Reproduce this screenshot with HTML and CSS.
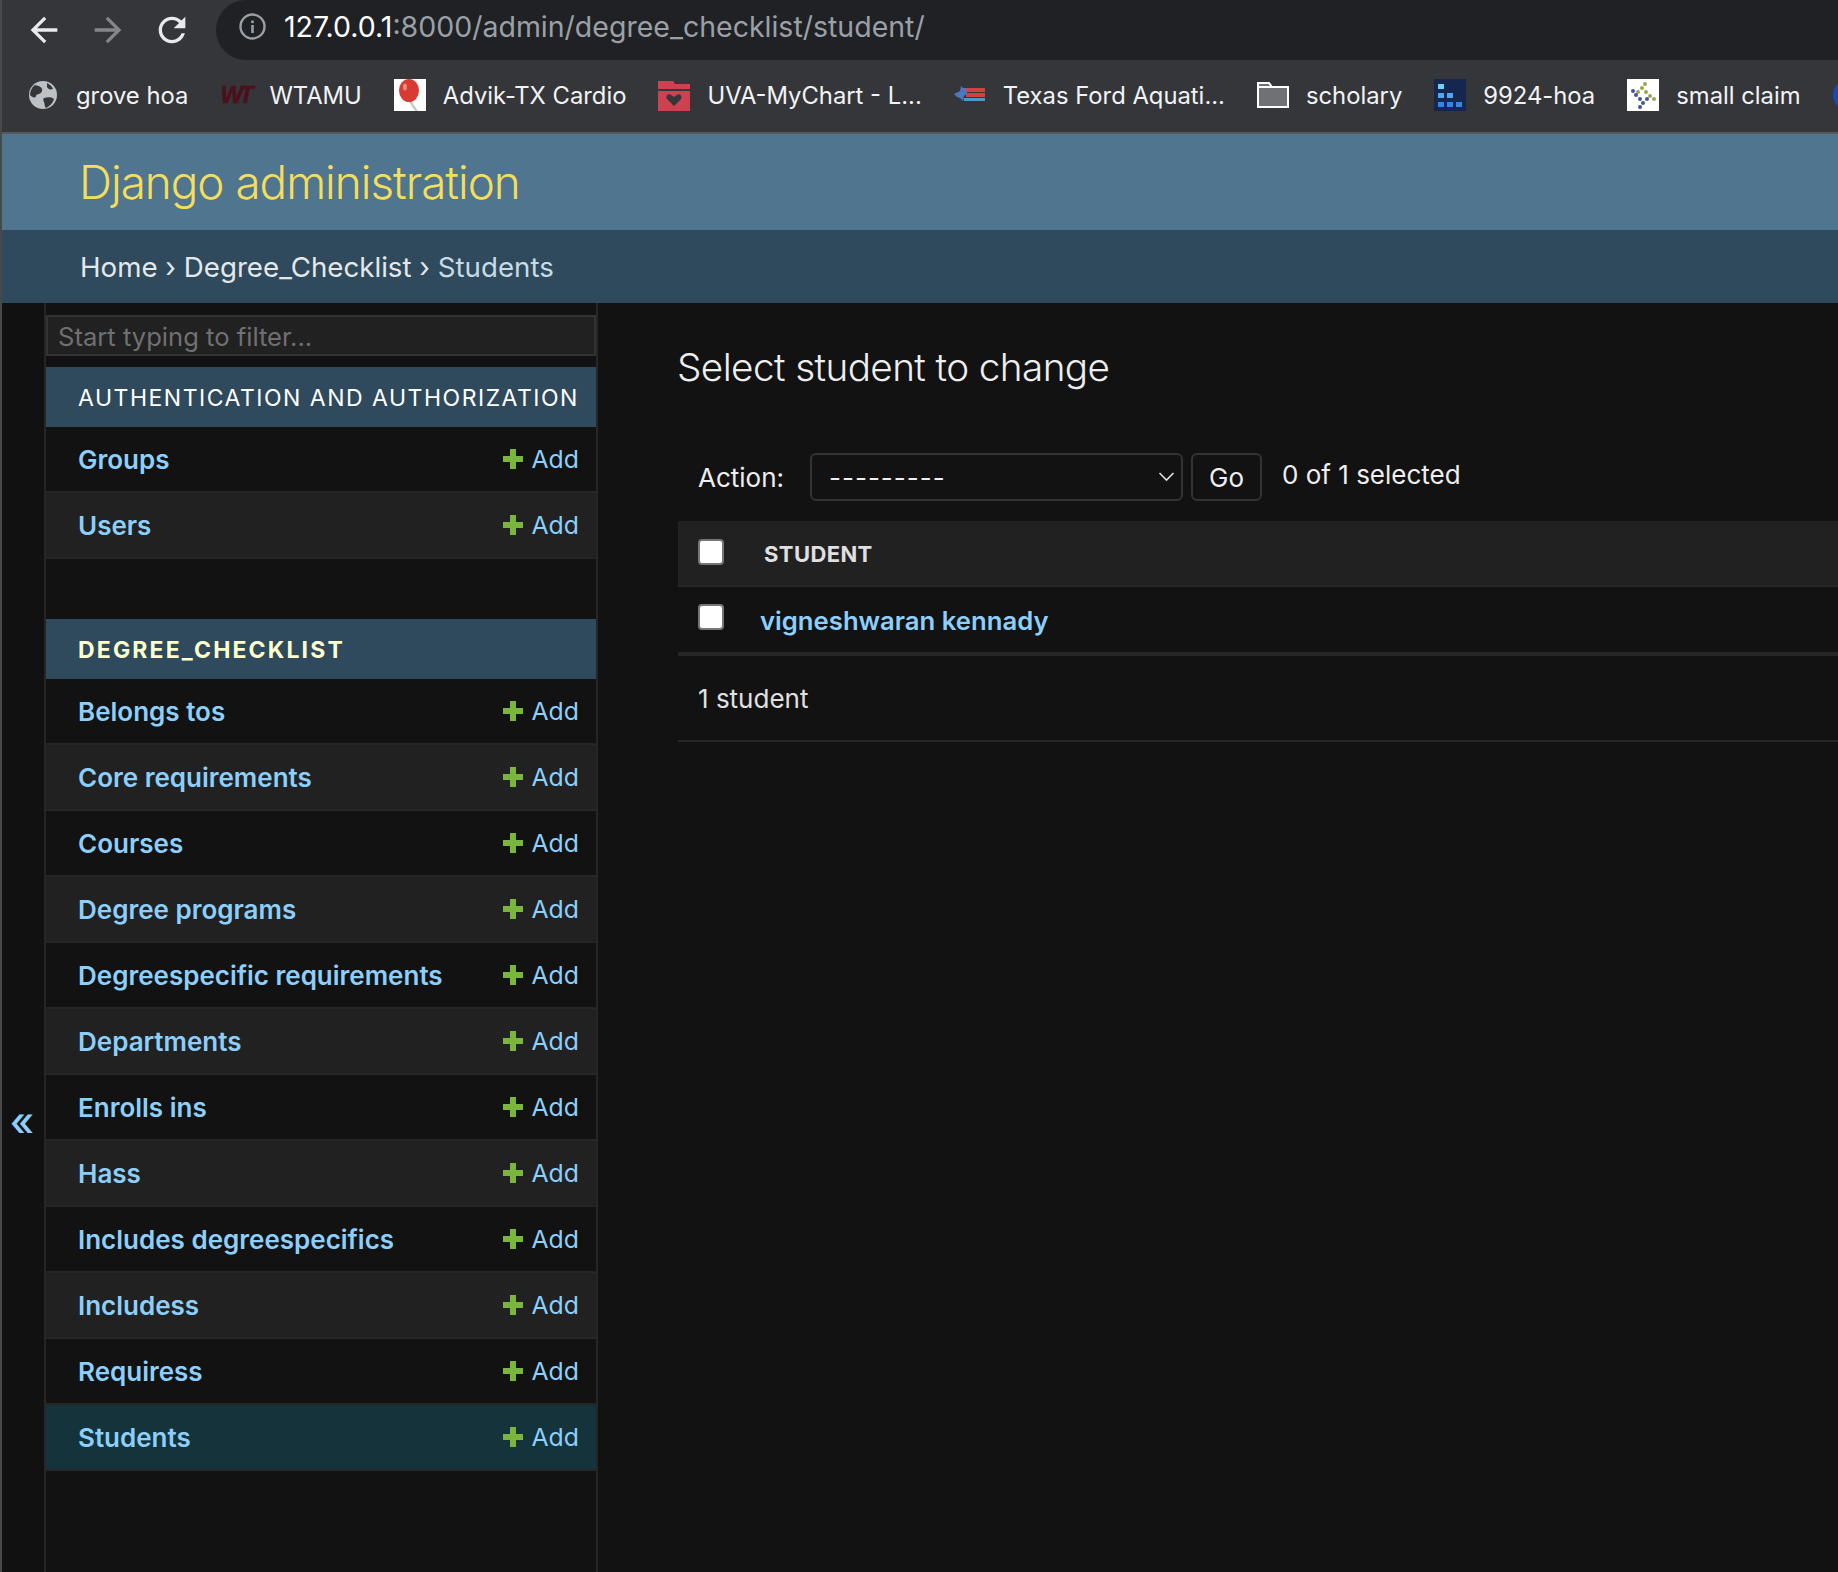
FILE: index.html
```html
<!DOCTYPE html>
<html lang="en">
<head>
  <meta charset="UTF-8">
  <title>Select student to change | Django site admin</title>
  <link rel="stylesheet" href="styles.css">
</head>
<body>

  <!-- Browser chrome -->
  <div class="toolbar">
    <svg class="nav-icon" viewBox="0 0 24 24"><path d="M20 11H7.83l5.59-5.59L12 4l-8 8 8 8 1.41-1.41L7.83 13H20v-2z"/></svg>
    <svg class="nav-icon off" viewBox="0 0 24 24"><path d="M4 11h12.17l-5.59-5.59L12 4l8 8-8 8-1.41-1.41L16.17 13H4v-2z"/></svg>
    <svg class="nav-icon" viewBox="0 0 24 24"><path d="M17.65 6.35C16.2 4.9 14.21 4 12 4c-4.42 0-7.99 3.58-7.99 8s3.57 8 7.99 8c3.73 0 6.84-2.55 7.73-6h-2.08c-.82 2.33-3.04 4-5.65 4-3.31 0-6-2.69-6-6s2.69-6 6-6c1.66 0 3.14.69 4.22 1.78L13 11h7V4l-2.35 2.35z"/></svg>
    <div class="address">
      <svg class="info-icon" viewBox="0 0 27 27">
        <circle cx="13.5" cy="13.5" r="12" fill="none" stroke="#9aa0a6" stroke-width="2.4"/>
        <rect x="12.2" y="12" width="2.6" height="8" fill="#9aa0a6"/>
        <rect x="12.2" y="7.5" width="2.6" height="2.6" fill="#9aa0a6"/>
      </svg>
      <span class="url">127.0.0.1<span class="url-rest">:8000/admin/degree_checklist/student/</span></span>
    </div>
  </div>

  <div class="bookmarks">
    <a class="bookmark">
      <svg class="fav" viewBox="-2 -2 32 32">
        <circle cx="14" cy="14" r="14" fill="#bdc1c6"/>
        <path d="M6 4c4 1 8 2 7 6s-5 2-6 5-4 1-6-1C1 10 3 6 6 4zM15 17c4-1 8-1 10 1-1 4-4 7-8 9-2-2-1-4-2-6s-1-3 0-4zM18 2c2 1 5 3 6 6-3 1-5 0-6-2z" fill="#35363a"/>
      </svg>
      grove hoa
    </a>
    <a class="bookmark"><span class="fav fav-wt">WT</span>WTAMU</a>
    <a class="bookmark">
      <svg class="fav" viewBox="0 0 32 32">
        <rect width="32" height="32" fill="#fff"/>
        <ellipse cx="15" cy="11.5" rx="10" ry="11.5" fill="#d93a32"/>
        <ellipse cx="11" cy="8" rx="2" ry="3.5" fill="#ee8a80"/>
        <path d="M15 23l6 9h3l-6-9z" fill="#c9c9c9"/>
      </svg>
      Advik-TX Cardio
    </a>
    <a class="bookmark">
      <svg class="fav" viewBox="0 0 32 32">
        <path d="M0 2h15l2 3h15v5H0zM0 12h32v20H0z" fill="#cf4150"/>
        <path d="M16 27l-7-7c-2-3 2-6 4-4l3 2 3-2c2-2 6 1 4 4z" fill="#35363a"/>
      </svg>
      UVA-MyChart - L...
    </a>
    <a class="bookmark">
      <svg class="fav" viewBox="0 0 32 32">
        <path d="M0 15l6-3 1-5 2 2h4v5l-3 3-1 5-3-3-3-1z" fill="#4a78b8"/>
        <rect x="12" y="9" width="19" height="4" fill="#d0433f"/>
        <rect x="12" y="14" width="19" height="4" fill="#d0433f"/>
        <rect x="10" y="19" width="21" height="3" fill="#4a9bc8"/>
      </svg>
      Texas Ford Aquati...
    </a>
    <a class="bookmark">
      <svg class="fav" viewBox="0 0 32 26">
        <path d="M1 1h11l3 4h16v20H1z" fill="#6f7175" stroke="#fff" stroke-width="2"/>
        <path d="M1 5h14" stroke="#fff" stroke-width="2"/>
      </svg>
      scholary
    </a>
    <a class="bookmark">
      <svg class="fav" viewBox="0 0 32 32">
        <rect width="32" height="32" fill="#15264f"/>
        <g fill="#4aa8f5">
          <rect x="4" y="5" width="6" height="5" fill="#6fd0f7"/>
          <rect x="4" y="14" width="6" height="5"/>
          <rect x="13" y="14" width="6" height="5"/>
          <rect x="4" y="23" width="6" height="5" fill="#2f86ee"/>
          <rect x="13" y="23" width="6" height="5" fill="#2f86ee"/>
          <rect x="22" y="23" width="6" height="5" fill="#2f86ee"/>
        </g>
      </svg>
      9924-hoa
    </a>
    <a class="bookmark">
      <svg class="fav" viewBox="0 0 32 32">
        <rect width="32" height="32" fill="#fff"/>
        <g fill="#9aa653">
          <circle cx="18" cy="5" r="2"/><circle cx="15" cy="9" r="2"/><circle cx="11" cy="13" r="2"/>
          <circle cx="19" cy="13" r="2"/><circle cx="23" cy="17" r="2"/><circle cx="27" cy="20" r="2"/>
        </g>
        <g fill="#45549c">
          <circle cx="6" cy="12" r="2"/><circle cx="9" cy="16" r="2"/><circle cx="13" cy="20" r="2"/>
          <circle cx="20" cy="20" r="2"/><circle cx="16" cy="24" r="2"/><circle cx="13" cy="28" r="2"/>
        </g>
      </svg>
      small claim
    </a>
    <span class="fav-edge"></span>
  </div>

  <!-- Django admin -->
  <div class="branding"><h1 class="site-name">Django administration</h1></div>
  <div class="breadcrumbs">Home &rsaquo; Degree_Checklist &rsaquo; <span class="crumb-current">Students</span></div>

  <div class="main">
    <button class="sidebar-toggle" type="button">&laquo;</button>

    <nav class="sidebar">
      <input class="nav-filter" type="text" placeholder="Start typing to filter...">

      <div class="app-caption">AUTHENTICATION AND AUTHORIZATION</div>
      <div class="model-row"><a class="model-link">Groups</a><a class="add-link"><span class="plus"></span>Add</a></div>
      <div class="model-row alt"><a class="model-link">Users</a><a class="add-link"><span class="plus"></span>Add</a></div>

      <div class="app-caption current-app">DEGREE_CHECKLIST</div>
      <div class="model-row"><a class="model-link">Belongs tos</a><a class="add-link"><span class="plus"></span>Add</a></div>
      <div class="model-row alt"><a class="model-link">Core requirements</a><a class="add-link"><span class="plus"></span>Add</a></div>
      <div class="model-row"><a class="model-link">Courses</a><a class="add-link"><span class="plus"></span>Add</a></div>
      <div class="model-row alt"><a class="model-link">Degree programs</a><a class="add-link"><span class="plus"></span>Add</a></div>
      <div class="model-row"><a class="model-link">Degreespecific requirements</a><a class="add-link"><span class="plus"></span>Add</a></div>
      <div class="model-row alt"><a class="model-link">Departments</a><a class="add-link"><span class="plus"></span>Add</a></div>
      <div class="model-row"><a class="model-link">Enrolls ins</a><a class="add-link"><span class="plus"></span>Add</a></div>
      <div class="model-row alt"><a class="model-link">Hass</a><a class="add-link"><span class="plus"></span>Add</a></div>
      <div class="model-row"><a class="model-link">Includes degreespecifics</a><a class="add-link"><span class="plus"></span>Add</a></div>
      <div class="model-row alt"><a class="model-link">Includess</a><a class="add-link"><span class="plus"></span>Add</a></div>
      <div class="model-row"><a class="model-link">Requiress</a><a class="add-link"><span class="plus"></span>Add</a></div>
      <div class="model-row selected"><a class="model-link">Students</a><a class="add-link"><span class="plus"></span>Add</a></div>
    </nav>

    <section class="content">
      <h2 class="page-title">Select student to change</h2>

      <div class="actions">
        <label class="action-label">Action:</label>
        <div class="select-wrap">
          <select class="action-select"><option>---------</option></select>
          <svg class="chevron" viewBox="0 0 16 10"><path d="M1 1l7 7 7-7" fill="none" stroke="#e0e0e0" stroke-width="1.6"/></svg>
        </div>
        <button class="go-btn" type="button">Go</button>
        <span class="selected-count">0 of 1 selected</span>
      </div>

      <div class="result-head">
        <input class="check" type="checkbox">
        <span class="col-title">STUDENT</span>
      </div>
      <div class="result-row">
        <input class="check" type="checkbox">
        <a class="result-link">vigneshwaran kennady</a>
      </div>
      <div class="paginator">1 student</div>
    </section>
  </div>

</body>
</html>
```

FILE: styles.css
```css
* {
  box-sizing: border-box;
}

html, body {
  height: 100%;
}

body {
  margin: 0;
  height: 1572px;
  overflow: hidden;
  display: flex;
  flex-direction: column;
  background: #121212;
  color: #eee;
  font-family: Inter, Roboto, sans-serif;
  border-left: 2px solid #48494c;
}

/* Browser chrome */
.toolbar {
  height: 60px;
  flex: none;
  display: flex;
  align-items: center;
  background: #35363a;
  padding-left: 22px;
}

.nav-icon {
  width: 40px;
  height: 40px;
  margin-right: 24px;
  fill: #e8eaed;
  flex: none;
}

.nav-icon.off {
  fill: #84868a;
}

.address {
  flex: 1;
  height: 60px;
  padding: 0 0 7px 23px;
  display: flex;
  align-items: center;
  gap: 18px;
  background: #202124;
  border-radius: 30px 0 0 30px;
}

.info-icon {
  width: 27px;
  height: 27px;
  flex: none;
}

.url {
  font-size: 28.5px;
  color: #fff;
}

.url-rest {
  color: #9aa0a6;
}

.bookmarks {
  height: 74px;
  flex: none;
  display: flex;
  align-items: center;
  gap: 32px;
  padding: 0 0 2px 25px;
  overflow: hidden;
  white-space: nowrap;
  background: #35363a;
  border-bottom: 2px solid #55585c;
}

.bookmark {
  display: flex;
  align-items: center;
  gap: 17px;
  flex: none;
  font-size: 23.8px;
  color: #f1f3f4;
}

.fav {
  width: 32px;
  height: 32px;
  flex: none;
}

.fav-wt {
  font: italic 900 24px/32px "Liberation Sans", sans-serif;
  font-weight: bold;
  letter-spacing: -4px;
  color: #4c0f1c;
  -webkit-text-stroke: 0.6px #4c0f1c;
}

.fav-edge {
  width: 32px;
  height: 32px;
  flex: none;
  border-radius: 50%;
  background: #1a47b8;
}

/* Django admin */
.branding {
  height: 96px;
  flex: none;
  display: flex;
  align-items: center;
  padding-left: 77px;
  background: #4f758f;
}

.site-name {
  margin: 0;
  font-size: 45.8px;
  font-weight: 300;
  letter-spacing: -1px;
  color: #f5dd5d;
}

.breadcrumbs {
  height: 73px;
  flex: none;
  display: flex;
  align-items: center;
  padding-left: 78px;
  white-space: pre;
  font-size: 27.7px;
  color: #e4e8ea;
  background: #2f4a5c;
}

.crumb-current {
  color: #c7dbe6;
}

.main {
  flex: 1;
  display: flex;
  min-height: 0;
}

.sidebar-toggle {
  width: 42px;
  flex: none;
  display: flex;
  justify-content: center;
  padding: 799px 2px 0 0;
  border: none;
  background: #111;
  color: #8ccffb;
  font-family: Inter, sans-serif;
  font-size: 40px;
  font-weight: 500;
  line-height: 1;
}

.sidebar {
  width: 554px;
  flex: none;
  padding-top: 12px;
  border-left: 2px solid #262626;
  border-right: 2px solid #262626;
  background: #121212;
}

.nav-filter {
  display: block;
  width: 100%;
  height: 41px;
  margin-bottom: 11px;
  padding: 2px 10px 0;
  border: 2px solid #333;
  background: #212121;
  color: #eee;
  font-family: Inter, sans-serif;
  font-size: 25.6px;
}

.nav-filter::placeholder {
  color: #707070;
}

.app-caption {
  height: 60px;
  display: flex;
  align-items: center;
  padding: 2px 0 0 32px;
  background: #2f4a5c;
  color: #fff;
  font-size: 23px;
  letter-spacing: 1.5px;
}

.current-app {
  margin-top: 60px;
  color: #ffffcc;
  font-weight: 700;
  letter-spacing: 2.15px;
}

.model-row {
  height: 66px;
  display: flex;
  align-items: center;
  justify-content: space-between;
  padding: 0 17px 0 32px;
  border-bottom: 2px solid #262626;
  background: #121212;
}

.model-row.alt {
  background: #212121;
}

.model-row.selected {
  background: #14333a;
}

.model-link {
  color: #8ccffb;
  font-size: 26px;
  font-weight: 600;
}

.add-link {
  display: flex;
  align-items: center;
  gap: 9px;
  color: #8ccffb;
  font-size: 24.8px;
}

/* green plus, two bars crossed */
.plus {
  width: 20px;
  height: 20px;
  background:
    linear-gradient(#7bb63c, #7bb63c) center / 100% 6px no-repeat,
    linear-gradient(#7bb63c, #7bb63c) center / 6px 100% no-repeat;
}

.content {
  flex: 1;
  padding: 0 0 0 80px;
  min-width: 0;
}

.page-title {
  margin: 0 0 0 -1px;
  padding-top: 41px;
  font-size: 38.7px;
  line-height: 47px;
  font-weight: 300;
  letter-spacing: -0.6px;
  color: #eee;
}

.actions {
  display: flex;
  align-items: center;
  height: 48px;
  margin-top: 62px;
  padding-left: 20px;
  font-size: 26px;
}

.action-label {
  width: 112px;
  flex: none;
}

.select-wrap {
  position: relative;
  width: 373px;
  height: 48px;
  flex: none;
}

.action-select {
  width: 100%;
  height: 100%;
  padding: 0 17px;
  appearance: none;
  border: 2px solid #333;
  border-radius: 6px;
  background: #121212;
  color: #eee;
  font-family: Inter, sans-serif;
  font-size: 26px;
  letter-spacing: 1px;
}

.chevron {
  position: absolute;
  right: 8px;
  top: 19px;
  width: 17px;
  height: 10px;
}

.go-btn {
  width: 71px;
  height: 48px;
  margin-left: 8px;
  flex: none;
  padding: 0;
  border: 2px solid #333;
  border-radius: 6px;
  background: #121212;
  color: #eee;
  font-family: Inter, sans-serif;
  font-size: 26px;
}

.selected-count {
  margin-left: 20px;
  margin-top: -5px;
}

.result-head {
  height: 66px;
  margin-top: 20px;
  display: flex;
  align-items: center;
  padding-left: 20px;
  background: #212121;
  border-bottom: 2px solid #262626;
}

.check {
  width: 26px;
  height: 26px;
  margin: 0;
  flex: none;
  appearance: none;
  background: #fff;
  border: 2px solid #767676;
  border-radius: 4px;
  transform: translateY(-1px);
}

.result-row .check {
  transform: translateY(-3px);
}

.col-title {
  margin-left: 40px;
  padding-top: 2px;
  font-size: 22px;
  font-weight: 700;
  letter-spacing: 0.4px;
  color: #e0e0e0;
}

.result-row {
  height: 69px;
  display: flex;
  align-items: center;
  padding-left: 20px;
  border-bottom: 4px solid #262626;
}

.result-link {
  margin-left: 36px;
  padding-top: 2px;
  color: #8ccffb;
  font-size: 25.7px;
  font-weight: 600;
}

.paginator {
  height: 86px;
  display: flex;
  align-items: center;
  padding-left: 20px;
  font-size: 26px;
  color: #e0e0e0;
  border-bottom: 2px solid #262626;
}
```
